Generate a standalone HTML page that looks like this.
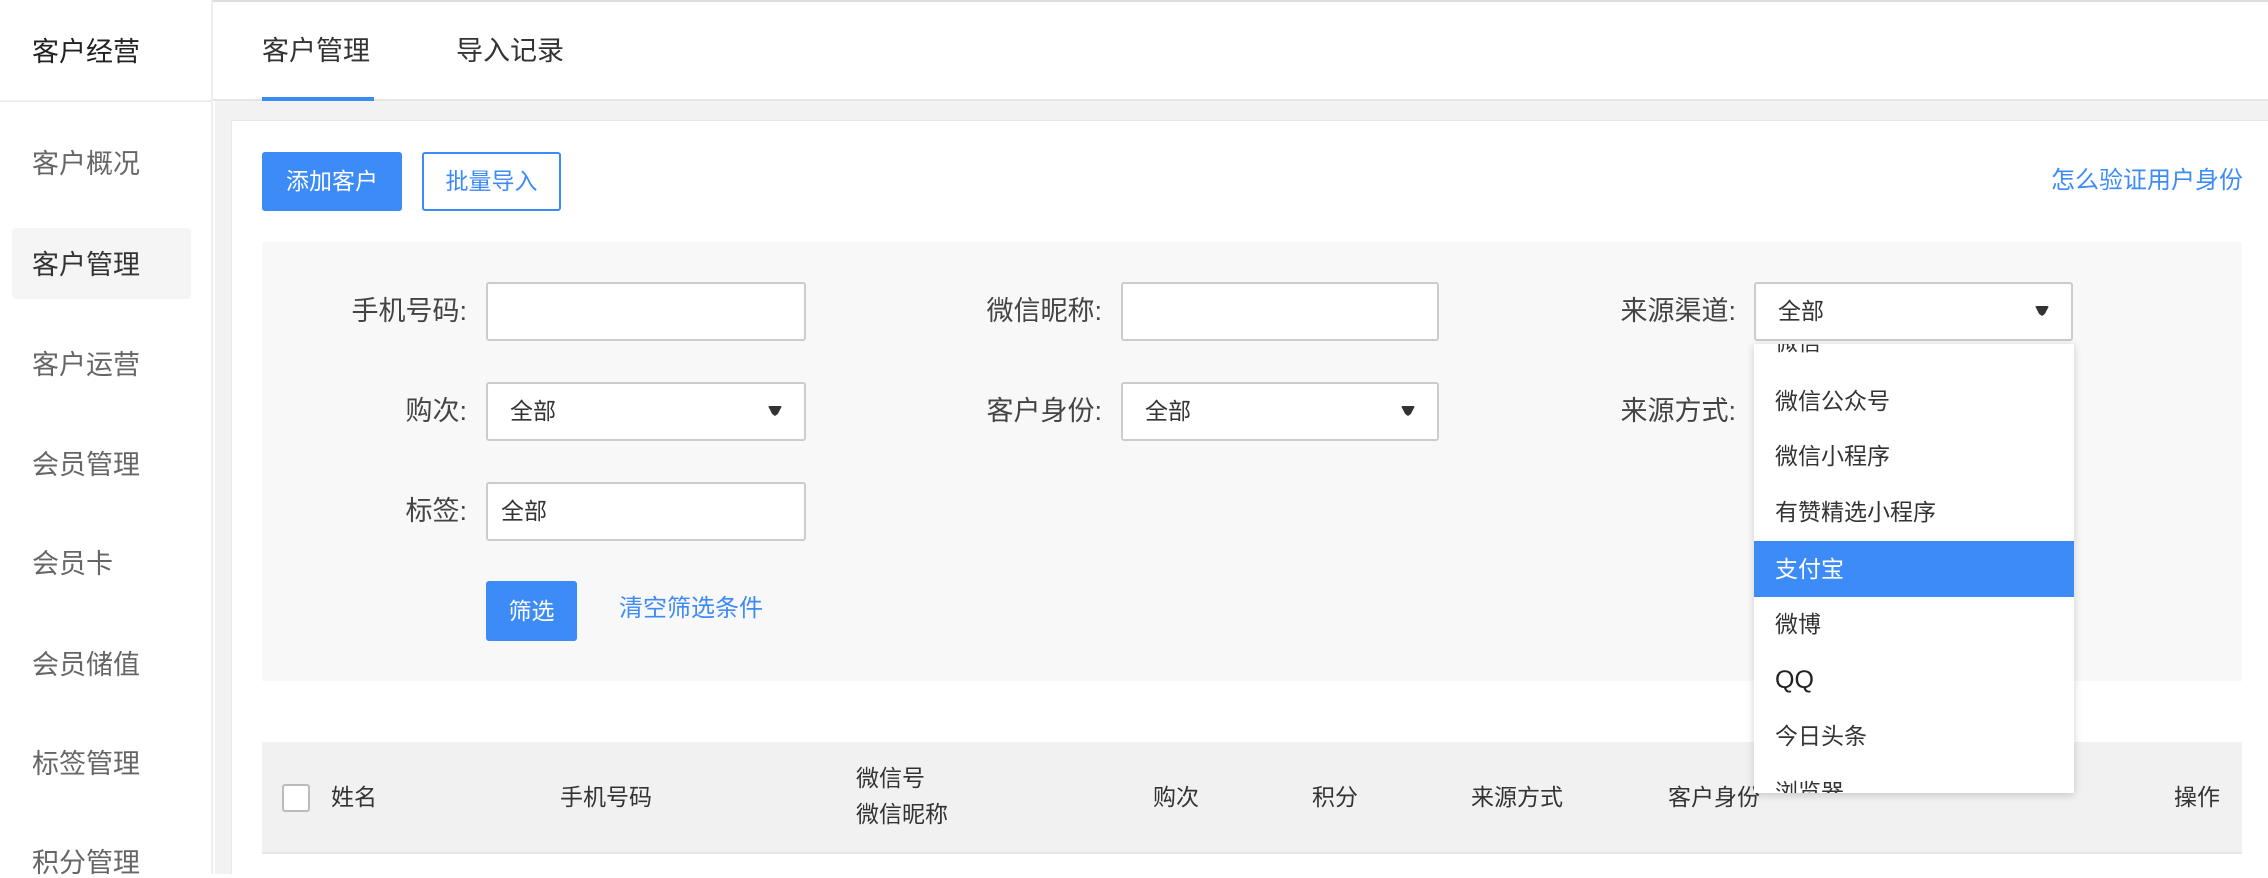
<!DOCTYPE html>
<html><head><meta charset="utf-8"><style>
*{margin:0;padding:0;box-sizing:border-box}
body{width:2268px;height:874px;overflow:hidden;background:#fff;font-family:"Liberation Sans","Noto Sans CJK SC",sans-serif;color:#333;position:relative}
.a{position:absolute;white-space:nowrap}
.side{left:0;top:0;width:213px;height:874px;background:#fff;border-right:2px solid #eee}
.si{left:32px;font-size:27px;color:#666;line-height:30px}
.lbl{font-size:27px;color:#444;text-align:right;line-height:30px}
.inp{background:#fff;border:2px solid #ccc;border-radius:3px;height:59px;font-size:23px;color:#333;line-height:55px;padding-left:22px}
.arr{position:absolute;right:22px;top:22px;width:14px;height:10px;background:#333;clip-path:polygon(0 0,100% 0,70% 80%,50% 100%,30% 80%);border-radius:2px}
.dd{font-size:23px;color:#333;left:21px;line-height:30px}
.th{font-size:23px;color:#333;line-height:30px}
</style></head><body>
<div class="a" style="left:0;top:0;width:2268px;height:2px;background:#ddd"></div>
<div class="a side"></div>
<div class="a" style="left:0;top:100px;width:213px;height:2px;background:#eee"></div>
<div class="a" style="left:32px;top:37px;font-size:27px;color:#222;line-height:30px">客户经营</div>
<div class="a" style="left:12px;top:228px;width:179px;height:71px;background:#f5f5f5;border-radius:4px"></div>
<div class="a si" style="top:149px">客户概况</div>
<div class="a si" style="top:250px;color:#333">客户管理</div>
<div class="a si" style="top:350px">客户运营</div>
<div class="a si" style="top:450px">会员管理</div>
<div class="a si" style="top:549px">会员卡</div>
<div class="a si" style="top:650px">会员储值</div>
<div class="a si" style="top:749px">标签管理</div>
<div class="a si" style="top:848px">积分管理</div>

<div class="a" style="left:213px;top:2px;width:2055px;height:99px;background:#fff;border-bottom:2px solid #e5e5e5"></div>
<div class="a" style="left:262px;top:36px;font-size:27px;color:#333;line-height:30px">客户管理</div>
<div class="a" style="left:456px;top:36px;font-size:27px;color:#333;line-height:30px">导入记录</div>
<div class="a" style="left:262px;top:97px;width:112px;height:4px;background:#3a8bf6"></div>
<div class="a" style="left:215px;top:101px;width:2053px;height:773px;background:#f2f2f2"></div>
<div class="a" style="left:231px;top:120px;width:2037px;height:754px;background:#fff;border-left:1px solid #e8e8e8;border-top:1px solid #e8e8e8"></div>

<div class="a" style="left:262px;top:152px;width:140px;height:59px;background:#3d8bf7;border-radius:3px;color:#fff;font-size:23px;line-height:59px;text-align:center">添加客户</div>
<div class="a" style="left:422px;top:152px;width:139px;height:59px;border:2px solid #3d8bf7;border-radius:3px;color:#3d8bf7;font-size:23px;line-height:55px;text-align:center">批量导入</div>
<div class="a" style="left:2051px;top:166px;font-size:24px;color:#3d8bf7;line-height:30px">怎么验证用户身份</div>

<div class="a" style="left:262px;top:242px;width:1980px;height:439px;background:#f8f8f8"></div>
<div class="a lbl" style="right:1801px;top:296px">手机号码:</div>
<div class="a inp" style="left:486px;top:282px;width:320px"></div>
<div class="a lbl" style="right:1166px;top:296px">微信昵称:</div>
<div class="a inp" style="left:1121px;top:282px;width:318px"></div>
<div class="a lbl" style="right:532px;top:296px">来源渠道:</div>
<div class="a inp" style="left:1754px;top:282px;width:319px">全部<span class="arr"></span></div>

<div class="a lbl" style="right:1801px;top:396px">购次:</div>
<div class="a inp" style="left:486px;top:382px;width:320px">全部<span class="arr"></span></div>
<div class="a lbl" style="right:1166px;top:396px">客户身份:</div>
<div class="a inp" style="left:1121px;top:382px;width:318px">全部<span class="arr"></span></div>
<div class="a lbl" style="right:532px;top:396px">来源方式:</div>

<div class="a lbl" style="right:1801px;top:496px">标签:</div>
<div class="a inp" style="left:486px;top:482px;width:320px;padding-left:13px">全部</div>

<div class="a" style="left:486px;top:581px;width:91px;height:60px;background:#3d8bf7;border-radius:3px;color:#fff;font-size:23px;line-height:60px;text-align:center">筛选</div>
<div class="a" style="left:619px;top:594px;font-size:24px;color:#3d8bf7;line-height:30px">清空筛选条件</div>

<div class="a" style="left:262px;top:742px;width:1980px;height:112px;background:#f1f1f1;border-bottom:2px solid #e6e6e6"></div>
<div class="a" style="left:282px;top:784px;width:28px;height:28px;background:#fff;border:2px solid #bbb;border-radius:3px"></div>
<div class="a th" style="left:331px;top:782px">姓名</div>
<div class="a th" style="left:560px;top:782px">手机号码</div>
<div class="a th" style="left:856px;top:763px">微信号</div>
<div class="a th" style="left:856px;top:799px">微信昵称</div>
<div class="a th" style="left:1153px;top:782px">购次</div>
<div class="a th" style="left:1312px;top:782px">积分</div>
<div class="a th" style="left:1471px;top:782px">来源方式</div>
<div class="a th" style="left:1668px;top:782px">客户身份</div>
<div class="a th" style="left:2174px;top:782px">操作</div>

<div class="a" style="left:1754px;top:344px;width:320px;height:449px;background:#fff;box-shadow:0 2px 8px rgba(0,0,0,.18);overflow:hidden">
<div class="a dd" style="top:-17px">微信</div>
<div class="a dd" style="top:42px">微信公众号</div>
<div class="a dd" style="top:97px">微信小程序</div>
<div class="a dd" style="top:153px">有赞精选小程序</div>
<div class="a" style="left:0;top:197px;width:320px;height:56px;background:#3d8bf7"></div>
<div class="a dd" style="top:210px;color:#fff">支付宝</div>
<div class="a dd" style="top:265px">微博</div>
<div class="a dd" style="top:321px;font-size:25px;color:#222">QQ</div>
<div class="a dd" style="top:377px">今日头条</div>
<div class="a dd" style="top:433px">浏览器</div>
</div>
</body></html>
